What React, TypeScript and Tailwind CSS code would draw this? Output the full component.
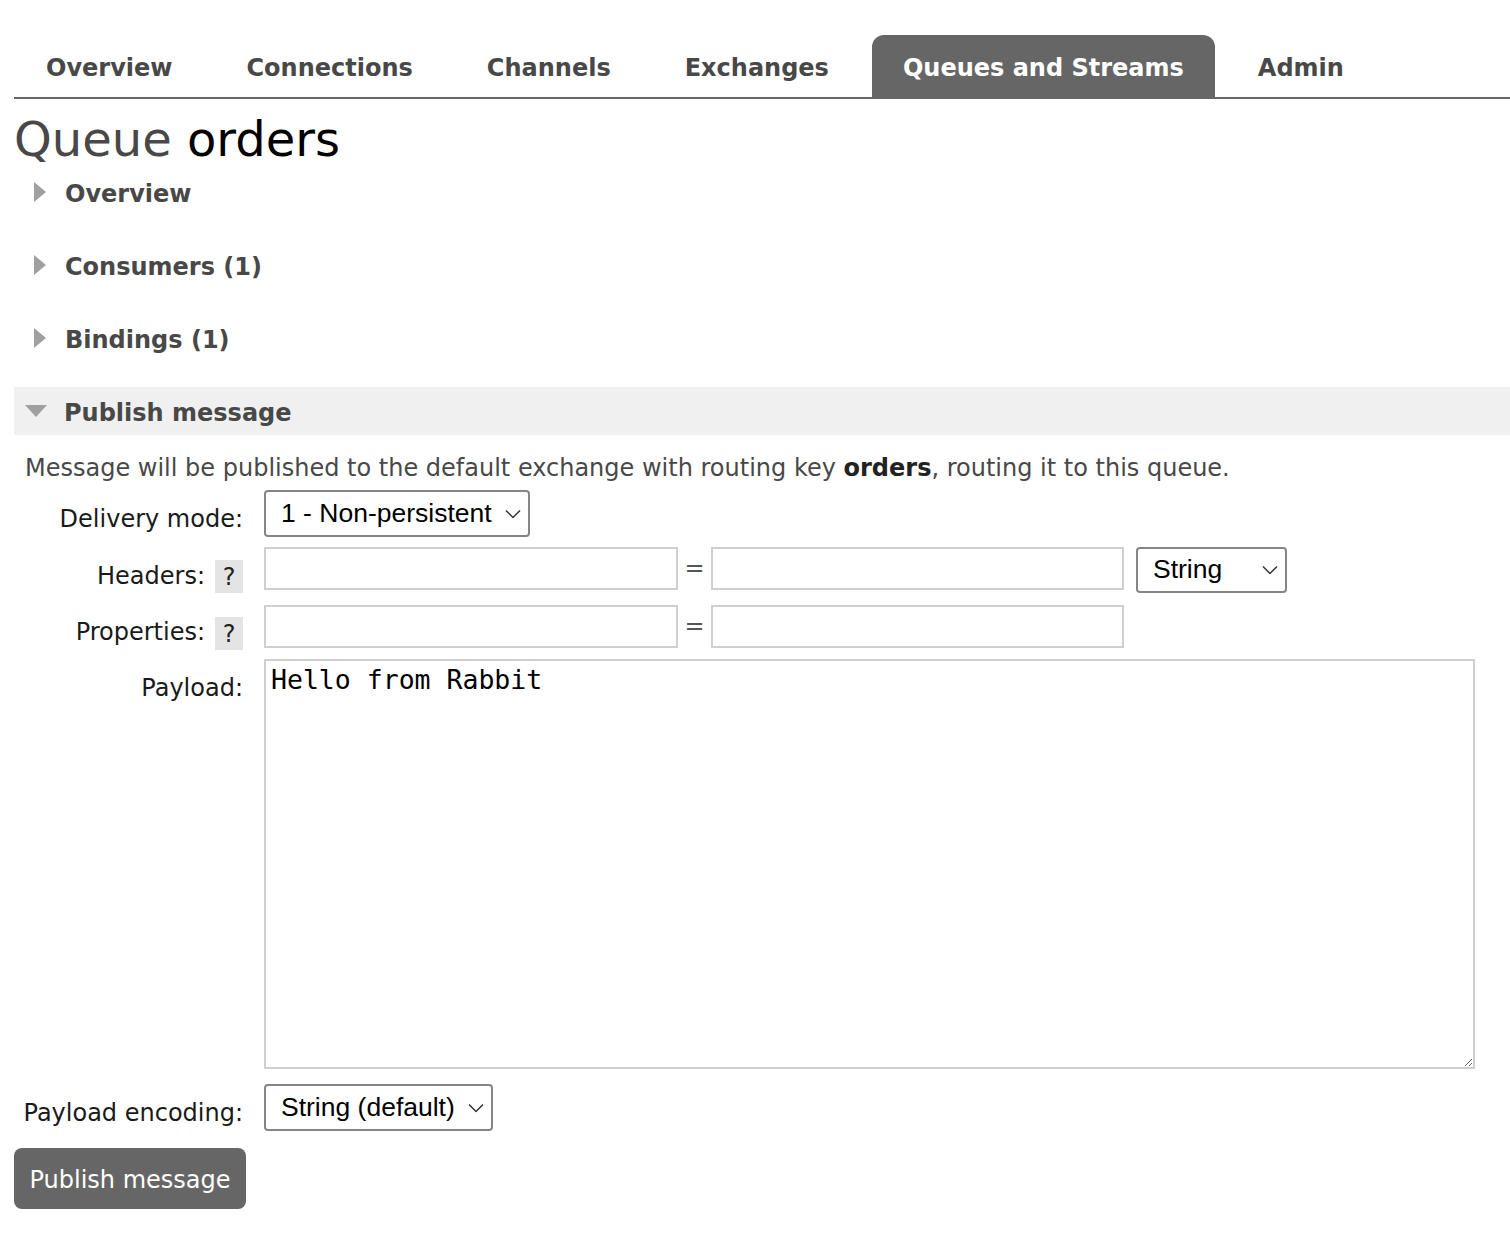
import { useState } from 'react'

const tabs = ['Overview', 'Connections', 'Channels', 'Exchanges', 'Queues and Streams', 'Admin']

function Chevron() {
  return (
    <svg
      className="pointer-events-none absolute right-[9px] top-1/2 -translate-y-1/2"
      width="16"
      height="9"
      viewBox="0 0 16 9"
      fill="none"
    >
      <polyline points="1,1 8,8 15,1" stroke="#333" strokeWidth="1.5" />
    </svg>
  )
}

function Select({ value, options, width }: { value: string; options: string[]; width: string }) {
  return (
    <div className={`relative h-full ${width}`}>
      <select
        defaultValue={value}
        className="h-full w-full appearance-none rounded-[4px] border-2 border-[#858585] bg-white pb-[2px] pl-[15px] text-[26.5px] text-black font-['Liberation_Sans',Arial,sans-serif] outline-none"
      >
        {options.map((o) => (
          <option key={o}>{o}</option>
        ))}
      </select>
      <Chevron />
    </div>
  )
}

function Help() {
  return (
    <span className="ml-[10px] flex h-[33px] w-[28px] items-center justify-center bg-[#e4e4e4] text-[24px] text-[#222]">
      ?
    </span>
  )
}

function Section({ title }: { title: string }) {
  return (
    <h2 className="mb-[25px] flex h-[48px] items-center pt-[4px] text-[24px] font-bold text-[#484848]">
      <span className="-mt-[4px] ml-[20px] mr-[19px] h-0 w-0 border-y-[10px] border-l-[12px] border-y-transparent border-l-[#a0a0a0]" />
      {title}
    </h2>
  )
}

export default function App() {
  const [payload, setPayload] = useState('Hello from Rabbit')

  return (
    <div className="min-h-screen bg-white pl-[14px] pt-[35px] font-['DejaVu_Sans',Verdana,sans-serif] text-[#484848]">
      <nav className="flex gap-[12px] border-b-2 border-[#666] pl-px">
        {tabs.map((t) => (
          <a
            key={t}
            className={`flex h-[62px] items-center rounded-t-[12px] px-[31px] pt-[4px] text-[24px] font-bold ${
              t === 'Queues and Streams' ? 'bg-[#666] text-white' : 'text-[#484848]'
            }`}
          >
            {t}
          </a>
        ))}
      </nav>

      <h1 className="mt-[11px] text-[48px] leading-[58px]">
        Queue <span className="text-black">orders</span>
      </h1>

      <Section title="Overview" />
      <Section title="Consumers (1)" />
      <Section title="Bindings (1)" />

      <h2 className="flex h-[48px] items-center bg-[#f0f0f0] pt-[4px] text-[24px] font-bold text-[#484848]">
        <span className="-mt-[4px] ml-[11px] mr-[17px] h-0 w-0 border-x-[11px] border-t-[12px] border-x-transparent border-t-[#a0a0a0]" />
        Publish message
      </h2>

      <p className="mt-[18px] pl-[11px] text-[24px] leading-[30px]">
        Message will be published to the default exchange with routing key <b className="text-[#222]">orders</b>, routing
        it to this queue.
      </p>

      <div className="text-[24px] leading-[28px] text-[#1a1a1a]">
        <div className="mt-[7px] flex h-[47px] gap-[21px]">
          <label className="w-[229px] pt-[15px] text-right">Delivery mode:</label>
          <Select value="1 - Non-persistent" options={['1 - Non-persistent', '2 - Persistent']} width="w-[266px]" />
        </div>

        <div className="mt-[10px] flex h-[46px] gap-[21px]">
          <div className="flex w-[229px] items-start justify-end">
            <label className="pt-[15px]">Headers:</label>
            <div className="pt-[13px]">
              <Help />
            </div>
          </div>
          <div className="flex items-start">
            <input className="h-[43px] w-[414px] border-2 border-[#cfcfcf] outline-none" />
            <span className="w-[33px] pt-[7px] text-center text-[#555]">=</span>
            <input className="h-[43px] w-[413px] border-2 border-[#cfcfcf] outline-none" />
            <div className="ml-[12px] h-[46px]">
              <Select value="String" options={['String', 'Number', 'Boolean']} width="w-[151px]" />
            </div>
          </div>
        </div>

        <div className="mt-[12px] flex h-[45px] gap-[21px]">
          <div className="flex w-[229px] items-start justify-end">
            <label className="pt-[13px]">Properties:</label>
            <div className="pt-[12px]">
              <Help />
            </div>
          </div>
          <div className="flex items-start">
            <input className="h-[43px] w-[414px] border-2 border-[#cfcfcf] outline-none" />
            <span className="w-[33px] pt-[7px] text-center text-[#555]">=</span>
            <input className="h-[43px] w-[413px] border-2 border-[#cfcfcf] outline-none" />
          </div>
        </div>

        <div className="mt-[9px] flex h-[410px] gap-[21px]">
          <label className="w-[229px] pt-[15px] text-right">Payload:</label>
          <textarea
            value={payload}
            onChange={(e) => setPayload(e.target.value)}
            className="h-[410px] w-[1211px] border-2 border-[#cfcfcf] px-[5px] pt-[3px] text-[26.5px] leading-[32px] text-black font-['DejaVu_Sans_Mono',monospace] outline-none"
          />
        </div>

        <div className="mt-[15px] flex h-[47px] gap-[21px]">
          <label className="w-[229px] pt-[15px] text-right">Payload encoding:</label>
          <Select value="String (default)" options={['String (default)', 'Base64']} width="w-[229px]" />
        </div>
      </div>

      <button className="mt-[17px] h-[61px] w-[232px] rounded-[8px] bg-[#666] pt-[2px] text-[24px] text-white">
        Publish message
      </button>
    </div>
  )
}
